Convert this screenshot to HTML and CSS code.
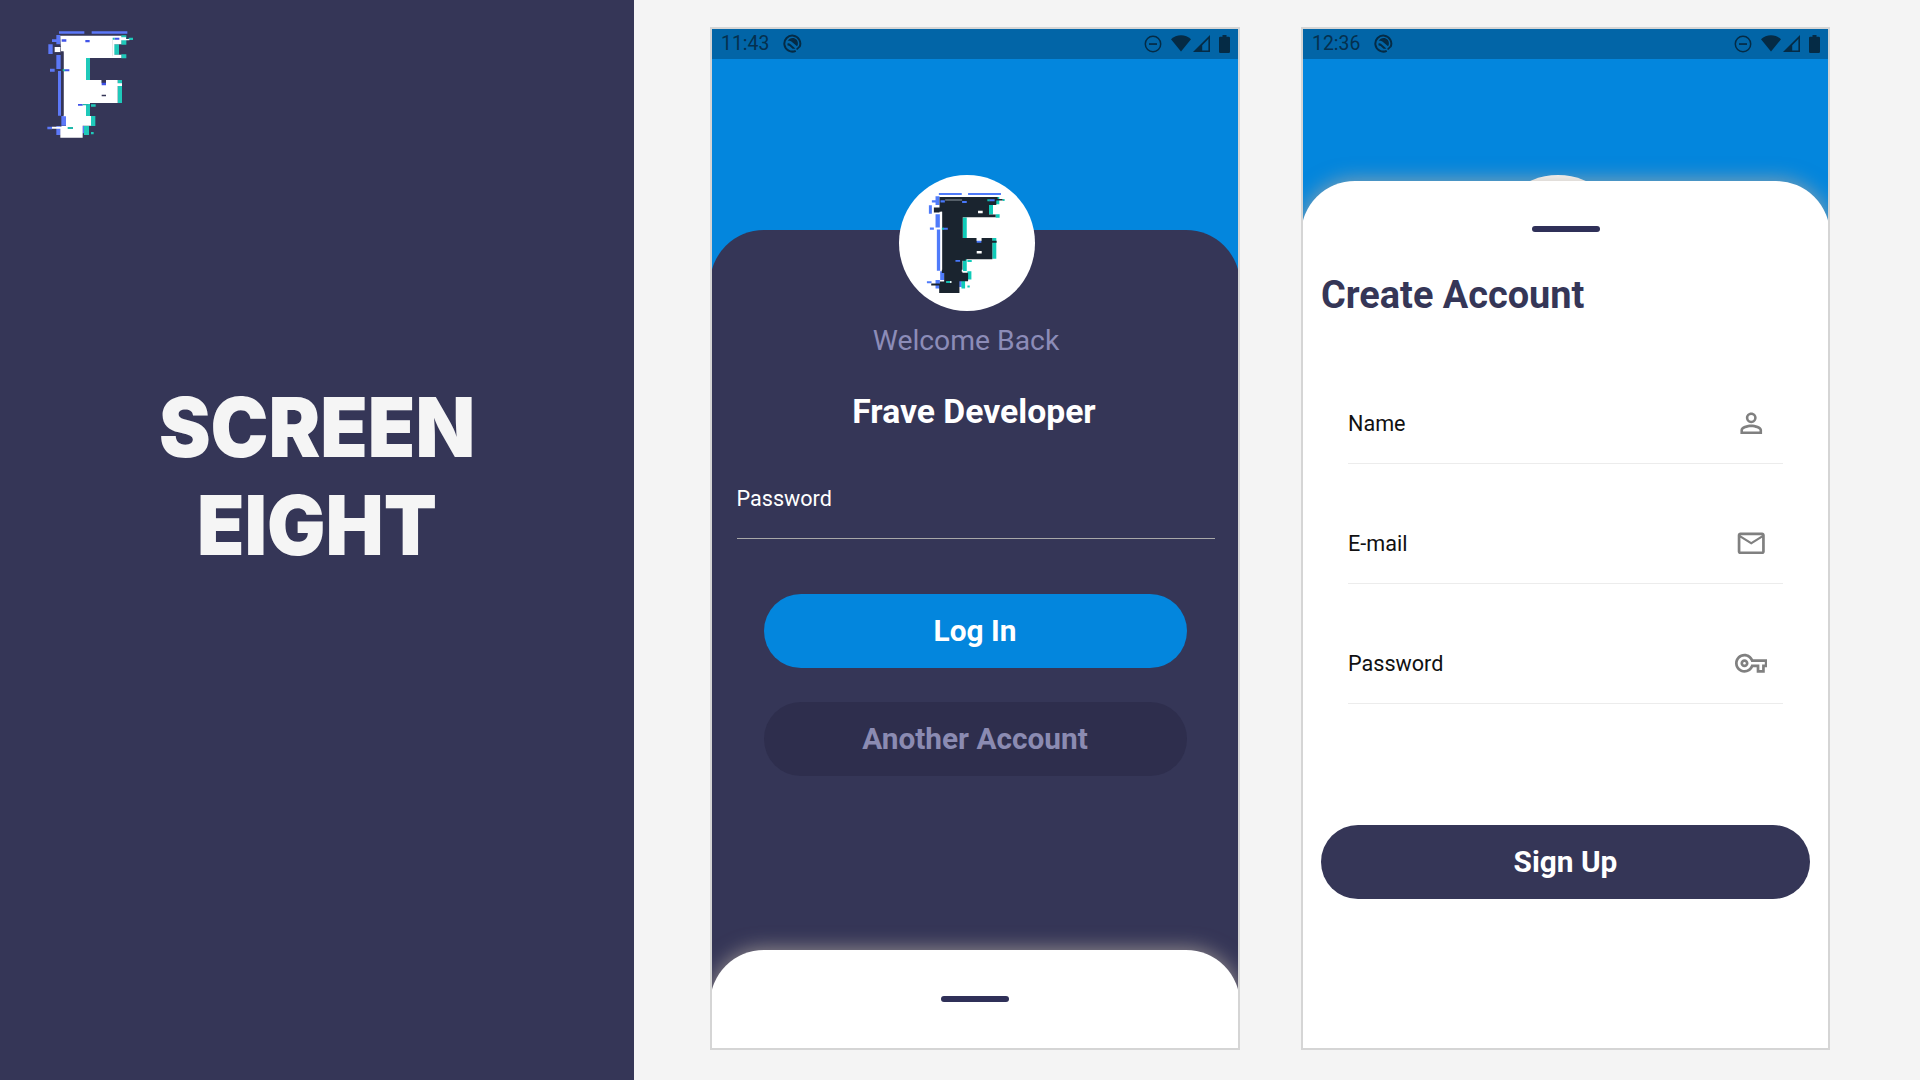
FILE: index.html
```html
<!DOCTYPE html>
<html lang="en">
<head>
<meta charset="utf-8">
<title>Screen Eight</title>
<link rel="stylesheet" href="styles.css">
</head>
<body>
<svg class="sprite" aria-hidden="true">
  <symbol id="edge" viewBox="0 0 20 20">
    <path d="M17.500 13.500A8.400 8.400 0 1 0 13.400 17.700" fill="none" stroke="currentColor" stroke-width="2.100"/>
    <path d="M14.300 16.300l3.100-3.100" fill="none" stroke="currentColor" stroke-width="1.800"/>
    <path d="M5 7.400C6 5.500 7.900 4.300 10.200 4.300c3.200 0 5.500 2.400 5.500 5.500 0 1.300-.3 2.300-.9 3.200L8.800 7.800C7.600 7 6.300 6.900 5 7.400z" fill="currentColor"/>
    <path d="M4.600 10.200c1.200-.7 2.200-.3 3 .3l5.400 4.700c-1 .4-1.900.5-2.900.4L6.900 12.700C6.200 12.100 5.500 12 4.900 12.100z" fill="currentColor"/>
  </symbol>
  <symbol id="dnd" viewBox="0 0 18 18">
    <circle cx="9" cy="9" r="7.700" fill="none" stroke="currentColor" stroke-width="1.500"/>
    <path d="M5 8.200h8v1.700H5z" fill="currentColor"/>
  </symbol>
  <symbol id="wifi" viewBox="0 0 20 17">
    <path d="M0 4.300C2.800 1.700 6.200.3 10 .3s7.200 1.400 10 4L10 16.600z" fill="currentColor"/>
  </symbol>
  <symbol id="signal" viewBox="0 0 17 17">
    <path fill-rule="evenodd" d="M17 0v17H0zM15.400 4L9.200 10.200v5.200h6.200z" fill="currentColor"/>
  </symbol>
  <symbol id="battery" viewBox="0 0 11 18">
    <path d="M3.500 0h4v1.800h2.300A1.200 1.200 0 0 1 11 3v13.800A1.200 1.200 0 0 1 9.800 18H1.200A1.200 1.200 0 0 1 0 16.800V3a1.200 1.200 0 0 1 1.200-1.200h2.300z" fill="currentColor"/>
  </symbol>
</svg>

<main class="page">
  <aside class="side">
    <svg class="logo" viewBox="0 0 360 390">
      <g fill="#5c78f8">
        <path d="M87 34h76v7H87zM185 34h107v7H185zM79 45h12v28H79zM66 58h14v8H66zM55 73h13v29H55zM79 105h13v42H79zM60 146h14v9H60zM84 153h9v134h-9zM94 288h14v29H94zM79 318h13v27H79zM52 320h14v8H52zM157 318h8v22h-8z"/>
      </g>
      <g fill="#1fc9ba">
        <path d="M274 46h15v28h-15zM296 53h13v7h-13zM252 73h15v31h-15zM274 103h15v12h-15zM168 114h12v67h-12zM263 180h13v69h-13zM168 250h12v38h-12zM183 253h14v7h-14zM182 288h14v30h-14zM162 317h15v28h-15zM183 336h8v7h-8z"/>
      </g>
      <path fill="#fff" d="M91 47h183v5h14v5h10v4h-24v12h-21v31h21v10H168v66h47v10h13v-10h35v10h13v8h-13v51H180v3h-12v36h15v29h-25v36H91v-27H66v-6h28v-2h14v-29h-7V94h-8zM74 81h17v16H74z"/>
      <path fill="#353657" d="M97 97h3v188h-3zM215 224h13v5h-13zM215 180h13v8h-13zM72 79h20v2H72zM74 97h16v2H74z"/>
      <path fill="#4053e8" d="M95 58h14v7H95zM166 60h13v7h-13zM254 53h14v6h-14zM104 148h14v6h-14zM215 188h13v8h-13zM144 252h14v5h-14z"/>
      <path fill="#1fb8aa" d="M248 53h6v6h-6zM98 148h7v6h-7zM158 252h16v4h-16zM113 321h16v6h-16z"/>
      <path fill="#ddd" d="M246 60h2v49h-2z"/>
    </svg>
    <h1 class="title">SCREEN<br>EIGHT</h1>
  </aside>

  <section class="phone login">
    <header class="status">
      <span class="clock">11:43</span>
      <svg class="i-edge"><use href="#edge"/></svg>
      <svg class="i-dnd"><use href="#dnd"/></svg>
      <svg class="i-wifi"><use href="#wifi"/></svg>
      <svg class="i-signal"><use href="#signal"/></svg>
      <svg class="i-battery"><use href="#battery"/></svg>
    </header>
    <div class="panel">
      <div class="avatar">
        <svg viewBox="0 0 408 408">
          <g transform="translate(-57 -45)">
            <path fill="#4f7bfa" d="M177 99h69v6h-69zM265 99h99v6h-99zM167 109h12v26h-12zM156 121h12v7h-12zM147 136h9v26h-9zM167 163h13v40h-13zM150 203h12v7h-12zM171 209h10v124h-10zM181 335h13v26h-13zM167 361h13v26h-13zM141 365h14v6h-14zM238 361h8v21h-8z"/>
            <path fill="#0fcbb8" d="M348 111h11v22h-11zM369 117h6v6h-6zM328 135h12v29h-12zM348 163h12v11h-12zM249 173h12v62h-12zM338 235h12v62h-12zM249 297h12v37h-12zM263 301h13v6h-13zM263 335h12v25h-12zM245 361h11v26h-11zM263 378h7v6h-7z"/>
            <path fill="#1a242f" d="M179 111h175v6h15v5h-19v13h-22v29h20v8H249v63h42v9h14v-9h33v8h13v6h-13v50H258v4h-10v36h17v26h-26v35h-61v-22h-24v-6h26v-6h13v-26h-7V156h-7zM162 143h17v15h-17z"/>
            <path fill="#fff" d="M183 156h4v174h-4zM295 153h14v7h-14zM291 274h15v7h-15zM201 364h14v6h-14zM291 235h14v8h-14zM246 330h4v6h-4z"/>
            <path fill="#555f69" d="M196 117h51v6h-51z"/>
            <path fill="#4777fa" d="M182 121h13v7h-13zM247 123h14v6h-14zM329 118h16v6h-16zM190 204h14v6h-14zM291 243h14v6h-14zM227 301h14v5h-14z"/>
            <path fill="#14bfb0" d="M323 118h7v6h-7zM186 204h6v6h-6zM199 364h12v6h-12z"/>
          </g>
        </svg>
      </div>
      <p class="welcome">Welcome Back</p>
      <h2 class="name">Frave Developer</h2>
      <label class="pw">Password</label>
      <button class="btn primary">Log In</button>
      <button class="btn muted">Another Account</button>
    </div>
    <div class="sheet peek"><i class="grip"></i></div>
  </section>

  <section class="phone signup">
    <header class="status">
      <span class="clock">12:36</span>
      <svg class="i-edge"><use href="#edge"/></svg>
      <svg class="i-dnd"><use href="#dnd"/></svg>
      <svg class="i-wifi"><use href="#wifi"/></svg>
      <svg class="i-signal"><use href="#signal"/></svg>
      <svg class="i-battery"><use href="#battery"/></svg>
    </header>
    <div class="behind"></div>
    <div class="sheet full">
      <i class="grip"></i>
      <h2 class="heading">Create Account</h2>
      <div class="fields">
        <label class="field"><span>Name</span>
          <svg viewBox="0 0 24 24"><path d="M12 5.900a2.100 2.100 0 1 1 0 4.200 2.100 2.100 0 0 1 0-4.200m0 9c2.970 0 6.100 1.460 6.100 2.100v1.100H5.900V17c0-.64 3.130-2.100 6.100-2.100M12 4C9.790 4 8 5.790 8 8s1.790 4 4 4 4-1.790 4-4-1.790-4-4-4zm0 9c-2.670 0-8 1.340-8 4v3h16v-3c0-2.660-5.330-4-8-4z"/></svg></label>
        <label class="field"><span>E-mail</span>
          <svg viewBox="0 0 24 24"><path d="M22 6c0-1.100-.9-2-2-2H4c-1.100 0-2 .9-2 2v12c0 1.100.9 2 2 2h16c1.100 0 2-.9 2-2V6zm-2 0l-8 5-8-5h16zm0 12H4V8l8 5 8-5v10z"/></svg></label>
        <label class="field"><span>Password</span>
          <svg viewBox="0 0 24 24"><path d="M22 19h-6v-4h-2.680c-1.140 2.420-3.600 4-6.320 4-3.860 0-7-3.140-7-7s3.140-7 7-7c2.720 0 5.170 1.580 6.320 4H24v6h-2v4zm-4-2h2v-4h2v-2H11.940l-.23-.67C11.010 8.340 9.110 7 7 7c-2.760 0-5 2.240-5 5s2.240 5 5 5c2.110 0 4.010-1.340 4.710-3.330l.23-.67H18v4zM7 15c-1.650 0-3-1.350-3-3s1.350-3 3-3 3 1.350 3 3-1.350 3-3 3zm0-4c-.55 0-1 .45-1 1s.45 1 1 1 1-.45 1-1-.45-1-1-1z"/></svg></label>
      </div>
      <button class="btn dark">Sign Up</button>
    </div>
  </section>
</main>
</body>
</html>
```
FILE: styles.css
```css
* { box-sizing: border-box; margin: 0; }
body { width: 1920px; height: 1080px; overflow: hidden; background: #f4f4f4; font-family: Roboto, sans-serif; }
.sprite { display: none; }
svg { display: block; flex: none; }
.page { display: flex; height: 1080px; align-items: flex-start; }

.side { width: 634px; height: 1080px; background: #353657; padding: 20px 0 0 30px; }
.logo { width: 120px; height: 130px; }
.title { margin: 228px 30px 0 0; text-align: center; font: 900 82.5px/98px Inter, sans-serif; transform: scaleX(.94); color: #f5f5f5; }

.phone { display: flex; flex-direction: column; height: 1023px; margin-top: 27px; border: 2px solid #d5d5d5; background: #0386dd; overflow: hidden; }
.login { width: 530px; margin-left: 76px; }
.signup { width: 529px; margin-left: 61px; }

.status { display: flex; flex: none; align-items: center; height: 30px; padding: 0 8px 1px 9px; background: #0265a7; color: #052b45; }
.clock { width: 62px; font-size: 19.4px; line-height: 29px; color: #05304e; }
.i-edge { width: 19px; height: 19px; }
.i-dnd { width: 18px; height: 18px; margin: 0 9px 0 auto; }
.i-wifi { width: 20px; height: 17px; margin-right: 2px; }
.i-signal { width: 17px; height: 17px; margin-right: 9px; }
.i-battery { width: 11px; height: 18px; }

.panel { display: flex; flex: none; flex-direction: column; align-items: center; height: 780px; margin: 170.500px -2px 0; border-radius: 54px 54px 0 0; background: #353657; }
.avatar { flex: none; width: 135.500px; height: 135.500px; margin: -54.200px 16px 0 0; border-radius: 50%; background: #fff; overflow: hidden; }
.avatar svg { width: 135.500px; height: 135.500px; }
.welcome { margin: 12.700px 18px 0 0; font-size: 28.300px; line-height: 34px; color: #8c8cb8; }
.name { margin: 34.500px 2px 0 0; font-size: 33.700px; line-height: 40px; color: #fff; }
.pw { width: 478px; height: 58px; margin: 49px 0 0 1px; padding-top: 5px; border-bottom: 1.500px solid #a8a8a8; font-size: 21.600px; line-height: 26px; color: #fff; }
.btn { display: block; height: 74px; border: 0; padding: 0; border-radius: 37px; font: 700 29.800px/74px Roboto, sans-serif; color: #fff; }
.primary { width: 423px; margin-top: 55px; background: #0386dd; }
.muted { width: 423px; margin-top: 34px; background: #2e2e4d; color: #8b8bb2; }

.sheet { position: relative; display: flex; flex: none; flex-direction: column; align-items: center; margin: 0 -2px; border-radius: 54px 54px 0 0; background: #fff; box-shadow: 0 0 20px 1px rgba(180, 170, 160, .75); }
.peek { height: 100px; margin-top: -60px; padding-top: 46px; }
.grip { flex: none; width: 68px; height: 6px; border-radius: 3px; background: #2f3058; }
.behind { flex: none; align-self: center; width: 136px; height: 136px; margin: 116px 16px 0 0; border-radius: 50%; background: #fff; }
.full { height: 870px; margin-top: -130.500px; padding-top: 45.500px; }
.heading { align-self: flex-start; margin: 41px 0 0 20px; font-size: 37.900px; line-height: 44px; color: #353657; }
.fields { width: 435px; margin-top: 27px; }
.field { display: flex; align-items: flex-end; justify-content: space-between; height: 120px; padding: 0 16px 23.500px 0; border-bottom: 1.500px solid #ececec; font-size: 21.600px; line-height: 32px; color: #111; }
.field svg { width: 32.5px; height: 32.5px; fill: #808080; }
.dark { flex: none; width: 489px; margin-top: 121px; background: #353657; }
```
